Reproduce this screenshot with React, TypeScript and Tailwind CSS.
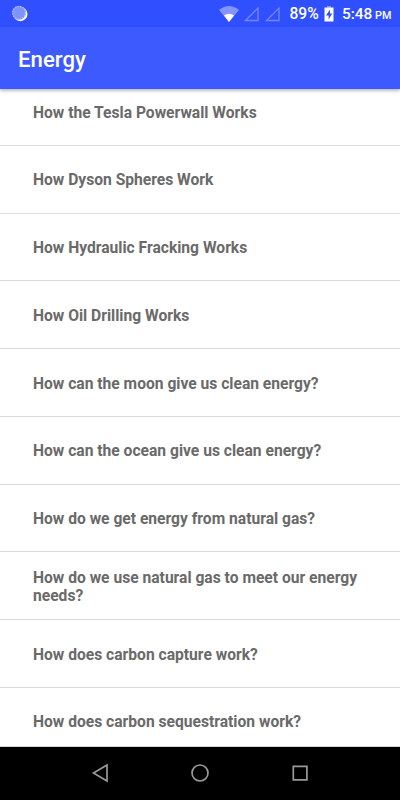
import React from 'react'

const topics = [
  'How the Tesla Powerwall Works',
  'How Dyson Spheres Work',
  'How Hydraulic Fracking Works',
  'How Oil Drilling Works',
  'How can the moon give us clean energy?',
  'How can the ocean give us clean energy?',
  'How do we get energy from natural gas?',
  'How do we use natural gas to meet our energy needs?',
  'How does carbon capture work?',
  'How does carbon sequestration work?',
]

function StatusBar() {
  return (
    <div className="relative z-20 flex h-[27px] shrink-0 items-center bg-[#304ffe] text-white">
      <svg className="ml-[11px]" width="18" height="18" viewBox="0 0 18 18">
        <circle cx="9.3" cy="9" r="7.2" fill="#fff" />
        <circle cx="8" cy="7.8" r="7" fill="#7f92fe" />
        <circle cx="8" cy="7.8" r="6.3" fill="none" stroke="#b5c0ff" strokeWidth="1.2" strokeDasharray="1.3 1.2" />
      </svg>
      <svg className="ml-[190px]" width="20" height="16" viewBox="0 0 20 16">
        <path d="M0 4Q10-4 20 4L10 16Z" fill="#8395fe" />
        <path d="M5 9.5Q10 6 15 9.5L10 16Z" fill="#fff" />
      </svg>
      <svg className="ml-[5px]" width="38" height="16" viewBox="0 0 38 16" fill="none" stroke="#7388fe" strokeWidth="1.3">
        <path d="M1.5 14.5H14V2ZM22.5 14.5H35V2Z" />
      </svg>
      <div className="ml-[7.5px] flex h-full items-center pt-[2px]">
        <span className="w-[30px] text-[15.6px] font-medium">89%</span>
      </div>
      <svg className="ml-[4px]" width="10" height="16" viewBox="0 0 10 16">
        <path d="M3 0h4v2H3Z" fill="#8395fe" />
        <path d="M0.5 1.5h9v14h-9Z" fill="#fff" />
        <path d="M6 3.5L2 9.5h2.6v4L8.2 7.5H6Z" fill="#304ffe" />
      </svg>
      <div className="ml-[8.5px] flex items-baseline pt-[2px] font-medium">
        <span className="w-[30px] text-[15.4px]">5:48</span>
        <span className="ml-[3px] text-[10.8px]">PM</span>
      </div>
    </div>
  )
}

export default function App() {
  return (
    <div className="flex h-[800px] w-[400px] flex-col overflow-hidden bg-white font-['Roboto',sans-serif]">
      <StatusBar />
      <header className="z-10 flex h-[62px] shrink-0 items-center bg-[#3d5afe] pl-[18px] pt-[3px] text-[22.2px] font-medium text-white shadow-[0_1px_4px_rgba(0,0,0,0.4)]">
        Energy
      </header>
      <main className="min-h-0 flex-1 overflow-hidden border-b border-[#d5d9d9]">
        <ul className="-mt-[10.9px]">
          {topics.map(topic => (
            <li key={topic} className="flex h-[67.75px] items-center border-b border-[#dbdbdb] px-[33px] pt-[2.2px] text-[15.62px] leading-[18px] font-bold text-[#6a6a6a]">
              {topic}
            </li>
          ))}
        </ul>
      </main>
      <nav className="flex h-[53px] shrink-0 items-center justify-center gap-[80px] bg-black pb-px">
        <svg width="20" height="20" viewBox="0 0 20 20" fill="none" stroke="#999" strokeWidth="1.7"><path d="M17 2V18L3.5 10Z" /></svg>
        <svg width="20" height="20" viewBox="0 0 20 20" fill="none" stroke="#999" strokeWidth="1.7"><circle cx="10" cy="10" r="8" /></svg>
        <svg width="20" height="20" viewBox="0 0 20 20" fill="none" stroke="#999" strokeWidth="1.7"><path d="M3.3 3.3H16.9V16.9H3.3Z" /></svg>
      </nav>
    </div>
  )
}
